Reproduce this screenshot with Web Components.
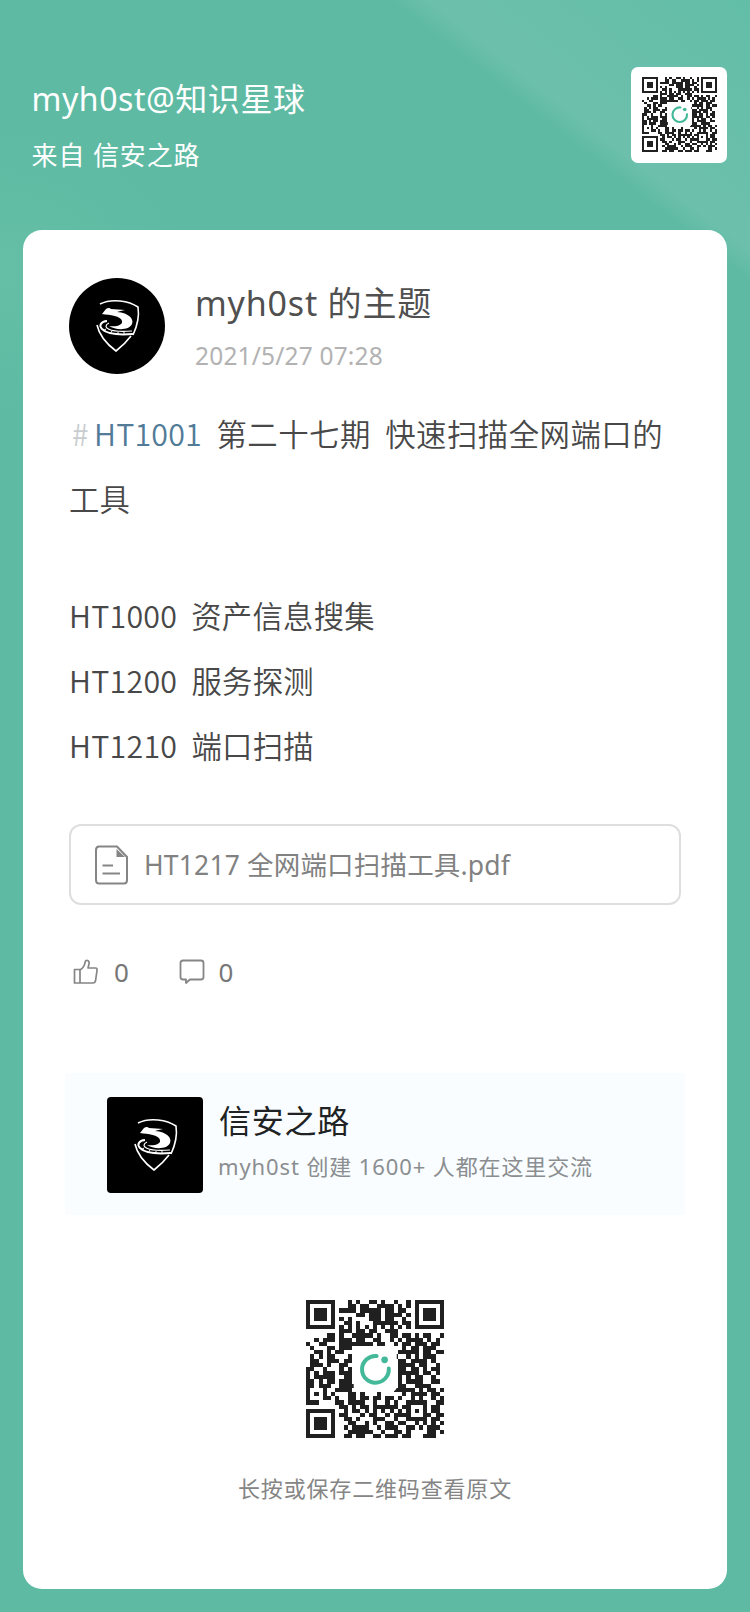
<!DOCTYPE html>
<html lang="zh-CN">
<head>
<meta charset="utf-8">
<title>信安之路</title>
<style>
html,body{margin:0;padding:0}
body{width:750px;height:1612px;overflow:hidden;background:#5ebaa3;font-family:"Noto Sans","Noto Sans CJK SC",sans-serif}
</style>
</head>
<body>
<share-poster></share-poster>
<script>
const define = (name, html, ready) => {
  const tpl = document.createElement('template');
  tpl.innerHTML = html;
  customElements.define(name, class extends HTMLElement {
    constructor() {
      super();
      this.attachShadow({mode: 'open'}).append(tpl.content.cloneNode(true));
    }
    connectedCallback() { if (ready) ready(this); }
  });
};

// One line of text whose letter spacing is adjusted to span the given width.
define('fit-text', `<style>:host{display:block;white-space:pre;flex:none}span{display:inline-block}</style><span><slot></slot></span>`, el => {
  const span = el.shadowRoot.querySelector('span');
  const width = +el.getAttribute('width');
  el.style.width = width + 'px';
  const gap = (width - span.getBoundingClientRect().width) / [...el.textContent].length;
  span.style.letterSpacing = gap + 'px';
});

const QR = [
'#######...#.#..##.#..#..#.#######',
'#.....#...##.##..####.#.#.#.....#',
'#.###.#.####.#####.##.##..#.###.#',
'#.###.#.....##.###.####.#.#.###.#',
'#.###.#.#.#....###.##..#..#.###.#',
'#.....#..##.#...######.##.#.....#',
'#######.#.#.#.#.#.#.#.#.#.#######',
'........###.##.##..###...........',
'.....##.#..#####.#..##.##.#.##..#',
'..#.###.###.##..##..#.#.####.#.#.',
'#..##...########.##..#.##.###.##.',
'.#...##.###............#.##.###..',
'..##.#.##.............#####.##.##',
'.#.#.##...#..........#..#.#.###..',
'.##..###.##...........##.####.#..',
'.###.#..##............####.##..#.',
'##..#...#.#...........##.##.#.##.',
'#.#.###.###...........#####.##.#.',
'#.#####..##...........#.#.##..#..',
'##.#.##.###...........#.####..##.',
'##.###..####..........##..####...',
'#...#..####..........#####.#.##.#',
'#.#.#.#...##.#...#.....#.####.##.',
'#...##.#..##.##.##.##.#..#.#..#.#',
'###....##.####..#..#.#..#####..##',
'........##.#.##.######.##...#.##.',
'#######..#.##.#.#.#.#.#.#.#.#.##.',
'#.....#.##...#.##..#.####...##.##',
'#.###.#..##.#...###..#..#####.##.',
'#.###.#...##..#.#..##.##..#.#.#.#',
'#.###.#..#.####..#.###..##.#.###.',
'#.....#...######..#..##.#....##.#',
'#######..##.##..##.###.##...###..'];
const modules = QR.map((row, y) => [...row].map((m, x) => m === '#' ? `M${x} ${y}h1v1h-1z` : '').join('')).join('');
define('qr-code', `<style>
:host{display:block;flex:none;width:138px;height:138px}
svg{display:block;width:100%;height:100%}</style>
<svg viewBox="0 0 33 33"><path shape-rendering="crispEdges" fill="#202020" d="${modules}"/>
<rect x="11.4" y="11.2" width="10.3" height="10.6" rx="1" fill="#fff"/>
<path d="M16.9 13.4A3.2 3.2 0 1 0 19.8 16.4" fill="none" stroke="#43b99a" stroke-width=".95" stroke-linecap="round"/>
<circle cx="18.8" cy="14.3" r=".8" fill="#43b99a"/></svg>`);

define('shield-logo', `<style>
:host{display:block;flex:none;width:96px;height:96px;background:#000;border-radius:var(--radius,50%);overflow:hidden}
svg{display:block;width:100%;height:100%}</style>
<svg viewBox="0 0 96 96" fill="none" stroke="#fff">
<path d="M31 26C43 20 60 23 69 29Q71 42 64 57" stroke-width="1.6"/>
<path d="M28 47Q31 61 47 73Q56 66 62 58" stroke-width="1.6"/>
<path fill="#fff" stroke="none" d="M33 36L37 31Q40 29 42 31L56 32Q51 33 48 34C60 35 65 41 63 46C60 53 46 52 40 48C48 49 54 47 53 43C52 38 41 37 33 36Z"/>
<path d="M38 43C26 44 28 59 64 56" stroke-width="1.9"/>
<path d="M40 45C32 49 40 55 63 53" stroke-width="1.2"/>
<path d="M34 53L37 51M41 56L43 53M49 57V54M55 57V54" stroke-width="1"/>
</svg>`);

define('poster-header', `<style>
:host{display:flex;justify-content:space-between;align-items:flex-start;padding:67px 23px 0 31.5px;height:163px;color:#fff}
.who{padding-top:9px}
.name{font-size:32px;line-height:46px}
.from{font-size:26px;line-height:38px;margin-top:14px}
.code{display:flex;align-items:center;justify-content:center;width:96px;height:94px;padding-bottom:2px;background:#fff;border-radius:7px}
qr-code{width:75px;height:75px}</style>
<div class="who"><fit-text class="name" width="274">myh0st@知识星球</fit-text><fit-text class="from" width="169">来自 信安之路</fit-text></div>
<div class="code"><qr-code></qr-code></div>`);

define('topic-author', `<style>
:host{display:flex;gap:30px;height:96px}
.name{font-size:34px;line-height:46px;color:#505050;margin-top:2px}
.date{font-size:24.5px;line-height:34px;color:#b2b2b2;margin-top:13px}</style>
<shield-logo></shield-logo><div><fit-text class="name" width="237">myh0st 的主题</fit-text><fit-text class="date" width="188">2021/5/27 07:28</fit-text></div>`);

define('topic-body', `<style>
:host{display:block;font:350 30.4px/65px "Noto Sans CJK SC DemiLight","Noto Sans CJK SC",sans-serif;color:#484848}
.row{display:flex}
.hash{font-size:30px;color:#c9cdcf;width:21px}
.tag{color:#527b98}
.list{margin-top:52px}</style>
<div class="row"><fit-text class="hash" width="22" style="margin-left:3px">#</fit-text><fit-text class="tag" width="108">HT1001</fit-text><fit-text width="461">  第二十七期  快速扫描全网端口的</fit-text></div>
<fit-text width="61">工具</fit-text>
<div class="list"><fit-text width="306">HT1000  资产信息搜集</fit-text><fit-text width="245">HT1200  服务探测</fit-text><fit-text width="245">HT1210  端口扫描</fit-text></div>`);

define('file-attachment', `<style>
:host{display:flex;align-items:center;box-sizing:border-box;width:612px;height:81px;border:2px solid #dedede;border-radius:12px;padding-left:23px;gap:14px;color:#818181;font-size:26.5px;line-height:38px}
svg{display:block;flex:none}</style>
<svg width="36" height="40" viewBox="0 0 36 40" fill="none" stroke="#858585" stroke-width="2"><path d="M5 1.5H23L33 12V35Q33 38.5 30 38.5H5Q2 38.5 2 35V5Q2 1.5 5 1.5Z"/><path d="M22.5 4V12H31Z" fill="#858585" stroke="none"/><path d="M8.5 20.5H19M8.5 28.5H26"/></svg>
<fit-text width="366"></fit-text>`, el => {
  const line = el.shadowRoot.querySelector('fit-text');
  const fresh = document.createElement('fit-text');
  fresh.setAttribute('width', '366');
  fresh.textContent = el.getAttribute('name');
  line.replaceWith(fresh);
});

define('topic-stats', `<style>
:host{display:flex;align-items:center;height:38px;color:#777;font-size:26px;line-height:38px}
svg{display:block;flex:none}
.n{width:15px}.like{margin:0 15px 0 4px}.comment{margin:0 14px 0 49.5px}</style>
<svg class="like" width="26" height="26" viewBox="0 0 26 26" fill="none" stroke="#858585" stroke-width="1.7" stroke-linejoin="round"><path d="M1.5 10.5H7V24H1.5ZM7 11Q11.5 8 12 3.5Q12.5 1 14.5 1.5Q16.5 2 16 5L15 9H22.5Q24.5 9 24 11.5L22.5 22Q22 24 20 24H7"/></svg><span class="n">0</span>
<svg class="comment" width="26" height="26" viewBox="0 0 26 26" fill="none" stroke="#858585" stroke-width="1.8" stroke-linejoin="round"><path d="M4 1.5H22Q24.5 1.5 24.5 4V18Q24.5 20.5 22 20.5H11L7 24V20.5H4Q1.5 20.5 1.5 18V4Q1.5 1.5 4 1.5Z"/></svg><span class="n">0</span>`);

define('group-panel', `<style>
:host{display:flex;box-sizing:border-box;width:620px;height:142px;padding:24px 0 0 42px;gap:16px;background:#f9fdff}
shield-logo{--radius:4px}
.name{font-size:32px;line-height:46px;color:#202223;margin-top:1px}
.about{font-size:22px;line-height:32px;color:#8b8e91;margin:6px 0 0 -1px}</style>
<shield-logo></shield-logo><div><fit-text class="name" width="131">信安之路</fit-text><fit-text class="about" width="375">myh0st 创建 1600+ 人都在这里交流</fit-text></div>`);

define('poster-card', `<style>
:host{display:block;box-sizing:border-box;margin:0 23px;width:704px;height:1359px;padding:48px 0 0 46px;background:#fff;border-radius:19px}
topic-body{margin-top:27px}
file-attachment{margin-top:46px}
topic-stats{margin-top:48px}
group-panel{margin:82px 0 0 -4px}
.code{margin:85px 46px 0 0;display:flex;flex-direction:column;align-items:center}
.tip{font-size:22px;line-height:32px;color:#858585;margin-top:34px}</style>
<topic-author></topic-author><topic-body></topic-body>
<file-attachment name="HT1217 全网端口扫描工具.pdf"></file-attachment>
<topic-stats></topic-stats><group-panel></group-panel>
<div class="code"><qr-code></qr-code><fit-text class="tip" width="274">长按或保存二维码查看原文</fit-text></div>`);

define('share-poster', `<style>
:host{display:block;width:750px;height:1612px;
background:
 radial-gradient(ellipse 190px 150px at 0 270px,rgba(112,200,170,.35),transparent),
 linear-gradient(218deg,rgba(99,190,168,.9) 0,rgba(110,192,173,.9) 197px,transparent 222px) top/750px 330px no-repeat,
 #5ebaa3}</style>
<poster-header></poster-header><poster-card></poster-card>`);
</script>
</body>
</html>
